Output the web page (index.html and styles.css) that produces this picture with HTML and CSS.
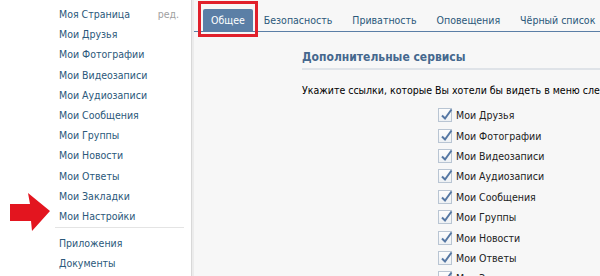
FILE: index.html
```html
<!DOCTYPE html>
<html lang="ru">
<head>
    <meta charset="UTF-8">
    <title>Мои Настройки</title>
    <link rel="stylesheet" href="styles.css">
</head>
<body>
    <div class="page">
        <aside class="sidebar">
            <ul class="side-menu">
                <li><a href="#">Моя Страница</a><span class="edit">ред.</span></li>
                <li><a href="#">Мои Друзья</a></li>
                <li><a href="#">Мои Фотографии</a></li>
                <li><a href="#">Мои Видеозаписи</a></li>
                <li><a href="#">Мои Аудиозаписи</a></li>
                <li><a href="#">Мои Сообщения</a></li>
                <li><a href="#">Мои Группы</a></li>
                <li><a href="#">Мои Новости</a></li>
                <li><a href="#">Мои Ответы</a></li>
                <li><a href="#">Мои Закладки</a></li>
                <li><a href="#">Мои Настройки</a></li>
            </ul>
            <div class="side-sep"></div>
            <ul class="side-menu">
                <li><a href="#">Приложения</a></li>
                <li><a href="#">Документы</a></li>
            </ul>

            <svg class="arrow" width="44" height="44" viewBox="0 0 44 44">
                <polygon points="0,11 20,11 18,0 40,18 22,38 21,28 0,28" fill="#e3151f"/>
            </svg>
        </aside>

        <main class="content">
            <nav class="tabs">
                <a href="#" class="tab active">Общее</a>
                <a href="#" class="tab">Безопасность</a>
                <a href="#" class="tab">Приватность</a>
                <a href="#" class="tab">Оповещения</a>
                <a href="#" class="tab">Чёрный список</a>
            </nav>
            <div class="mark"></div>

            <section class="settings">
                <h2>Дополнительные сервисы</h2>
                <p class="hint">Укажите ссылки, которые Вы хотели бы видеть в меню слева.</p>

                <ul class="checks">
                    <li><span class="check"></span>Мои Друзья</li>
                    <li><span class="check"></span>Мои Фотографии</li>
                    <li><span class="check"></span>Мои Видеозаписи</li>
                    <li><span class="check"></span>Мои Аудиозаписи</li>
                    <li><span class="check"></span>Мои Сообщения</li>
                    <li><span class="check"></span>Мои Группы</li>
                    <li><span class="check"></span>Мои Новости</li>
                    <li><span class="check"></span>Мои Ответы</li>
                    <li><span class="check"></span>Мои Закладки</li>
                </ul>
            </section>
        </main>
    </div>

    <script>
        // every checkbox gets the same tick
        document.querySelectorAll(".check").forEach(el => {
            el.innerHTML = '<svg width="14" height="14" viewBox="0 0 14 14"><path d="M3 7.5 L6 10.5 L12.5 1.5" fill="none" stroke="#5577a3" stroke-width="2"/></svg>';
        });
    </script>
</body>
</html>
```

FILE: styles.css
```css
body {
    margin: 0;
    padding: 0;
    font-family: "DejaVu Sans Condensed", "DejaVu Sans", sans-serif;
    font-size: 10.5px;
    background: #f7f7f7;
    overflow: hidden;
}

a {
    text-decoration: none;
}

.page {
    display: flex;
    height: 276px;
}

.sidebar {
    position: relative;
    width: 191px;
    flex-shrink: 0;
    background: white;
    border-right: 1px solid #d8d8d8;
    padding-top: 4px;
}

.side-menu {
    list-style: none;
    margin: 0;
    padding: 0 0 0 59px;
}

.side-menu li {
    display: flex;
    height: 20.2px;
    line-height: 20.2px;
}

.side-menu a {
    color: #2b587a;
}

.edit {
    margin-left: auto;
    margin-right: 12px;
    color: #a0a0a0;
}

.side-sep {
    height: 1px;
    background: #e4e4e4;
    margin: 1px 7px 5px 55px;
}

.arrow {
    position: absolute;
    left: 10px;
    top: 193px;
}

.content {
    position: relative;
    flex: 1;
    border-left: 2px solid #ececec;
    overflow: hidden;
    white-space: nowrap;
}

.tabs {
    display: flex;
    padding: 9px 0 0 9px;
    border-bottom: 1px solid #5b7ea6;
}

.tab {
    height: 22px;
    line-height: 22px;
    padding: 0 10px;
    color: #2b587a;
}

.tab.active {
    background: #5b7fa6;
    color: white;
    padding: 0 8px;
    border-radius: 2px 2px 0 0;
    margin-right: 1px;
}

/* red frame drawn over the first tab */
.mark {
    position: absolute;
    left: 4px;
    top: 1px;
    width: 54px;
    height: 30px;
    border: 3px solid #e1202b;
}

.settings {
    padding-left: 108px;
}

h2 {
    margin: 18px 0 0 0;
    padding: 0 0 3px 0;
    font-size: 12px;
    line-height: 15px;
    color: #45688e;
    border-bottom: 2px solid #dfe3e8;
}

.hint {
    margin: 13px 0 0 0;
    line-height: 14px;
    color: #000;
}

.checks {
    list-style: none;
    margin: 8px 0 0 0;
    padding: 0 0 0 136px;
}

.checks li {
    display: flex;
    align-items: center;
    gap: 4px;
    height: 20.4px;
    color: #222;
}

.check {
    width: 12px;
    height: 12px;
    border: 1px solid #b9c5d3;
    background: linear-gradient(#fdfdfd, #eef1f4);
    position: relative;
}

.check svg {
    position: absolute;
    left: 0;
    top: -1px;
    overflow: visible;
}
```
